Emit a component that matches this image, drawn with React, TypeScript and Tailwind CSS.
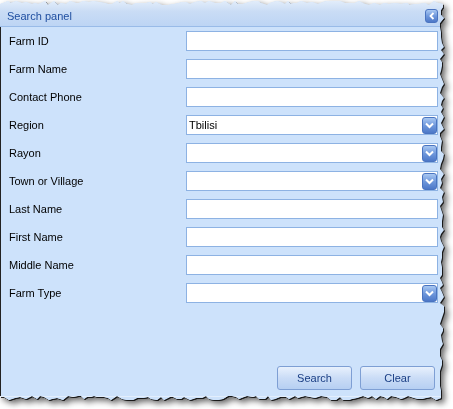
import React from "react";

type Field = { label: string; kind: "text" | "select"; value?: string };

const fields: Field[] = [
  { label: "Farm ID", kind: "text" },
  { label: "Farm Name", kind: "text" },
  { label: "Contact Phone", kind: "text" },
  { label: "Region", kind: "select", value: "Tbilisi" },
  { label: "Rayon", kind: "select" },
  { label: "Town or Village", kind: "select" },
  { label: "Last Name", kind: "text" },
  { label: "First Name", kind: "text" },
  { label: "Middle Name", kind: "text" },
  { label: "Farm Type", kind: "select" },
];

// jagged "torn paper" outline for the screenshot edge
function tornPolygon(w: number, h: number) {
  let seed = 7;
  const rnd = () => {
    seed = (seed * 9301 + 49297) % 233280;
    return seed / 233280;
  };
  const pts: string[] = [];
  pts.push(`0px ${4}px`);
  for (let x = 3; x < w - 8; x += 3 + Math.floor(rnd() * 4)) {
    pts.push(`${x}px ${1 + Math.floor(rnd() * 5)}px`);
  }
  for (let y = 4; y < h - 8; y += 3 + Math.floor(rnd() * 4)) {
    pts.push(`${w - 7 + Math.floor(rnd() * 5)}px ${y}px`);
  }
  for (let x = w - 6; x > 2; x -= 3 + Math.floor(rnd() * 4)) {
    pts.push(`${x}px ${h - 7 + Math.floor(rnd() * 5)}px`);
  }
  pts.push(`0px ${h - 6}px`);
  return `polygon(${pts.join(",")})`;
}

function ChevronDown() {
  return (
    <svg width="9" height="7" viewBox="0 0 9 7">
      <path d="M1 1.5 L4.5 5 L8 1.5" fill="none" stroke="white" strokeWidth="2" />
    </svg>
  );
}

function DropButton() {
  return (
    <div className="flex h-[17px] w-[15px] items-center justify-center rounded-[3px] border border-[#4a74c0] bg-[linear-gradient(to_bottom,#a9c8f2,#6f98dc_50%,#4d78c8)]">
      <ChevronDown />
    </div>
  );
}

export default function App() {
  const W = 447;
  const H = 403;

  return (
    <div className="h-[409px] w-[453px] overflow-hidden bg-white font-['Liberation_Sans',Arial,sans-serif] text-[11px]">
      <div className="w-[447px] h-[403px] [filter:drop-shadow(1px_1px_0_rgba(0,0,0,0.8))_drop-shadow(3px_3px_3px_rgba(0,0,0,0.6))]">
        <div
          className="flex h-[403px] w-[447px] flex-col bg-[#cde2fb]"
          style={{ clipPath: tornPolygon(W, H) }}
        >
          {/* header */}
          <div className="flex h-[27px] shrink-0 items-center justify-between border-b border-[#99bbe8] bg-[linear-gradient(to_bottom,#e4eefb,#c9dcf5_45%,#bdd5f4)] pl-[7px] pr-[9px] pt-[6px]">
            <span className="text-[#1f4ea0]">Search panel</span>
            <div className="flex h-[14px] w-[13px] items-center justify-center rounded-[3px] border border-[#4a74c0] bg-[linear-gradient(to_bottom,#a9c8f2,#6f98dc_50%,#4d78c8)]">
              <svg width="6" height="8" viewBox="0 0 6 8">
                <path d="M4.5 1 L1.5 4 L4.5 7" fill="none" stroke="white" strokeWidth="1.8" />
              </svg>
            </div>
          </div>

          {/* body */}
          <div className="flex flex-1 flex-col border-l border-[#222] pl-[8px] pr-[9px] pt-[4px]">
            <div className="flex flex-col gap-[8px]">
              {fields.map((f) => (
                <div key={f.label} className="flex h-[20px] items-center">
                  <span className="w-[177px] pt-[1px] text-black">{f.label}</span>
                  <div className="flex h-[20px] flex-1 items-center justify-between border border-[#8db2e3] bg-white pl-[2px]">
                    <span className="pt-[1px] text-black">{f.value ?? ""}</span>
                    {f.kind === "select" && <DropButton />}
                  </div>
                </div>
              ))}
            </div>

            <div className="mt-auto mb-[6px] flex justify-end gap-[8px] pr-[3px]">
              <button className="h-[24px] w-[75px] rounded-[3px] border border-[#7e9fd4] bg-[linear-gradient(to_bottom,#e8f1fd,#cadcf6_50%,#b6cff2)] text-[#1b3f85]">
                Search
              </button>
              <button className="h-[24px] w-[75px] rounded-[3px] border border-[#7e9fd4] bg-[linear-gradient(to_bottom,#e8f1fd,#cadcf6_50%,#b6cff2)] text-[#1b3f85]">
                Clear
              </button>
            </div>
          </div>
          <div className="h-[7px] shrink-0 border-t border-[#e3eefc] bg-[#cde2fb]" />
        </div>
      </div>
    </div>
  );
}
